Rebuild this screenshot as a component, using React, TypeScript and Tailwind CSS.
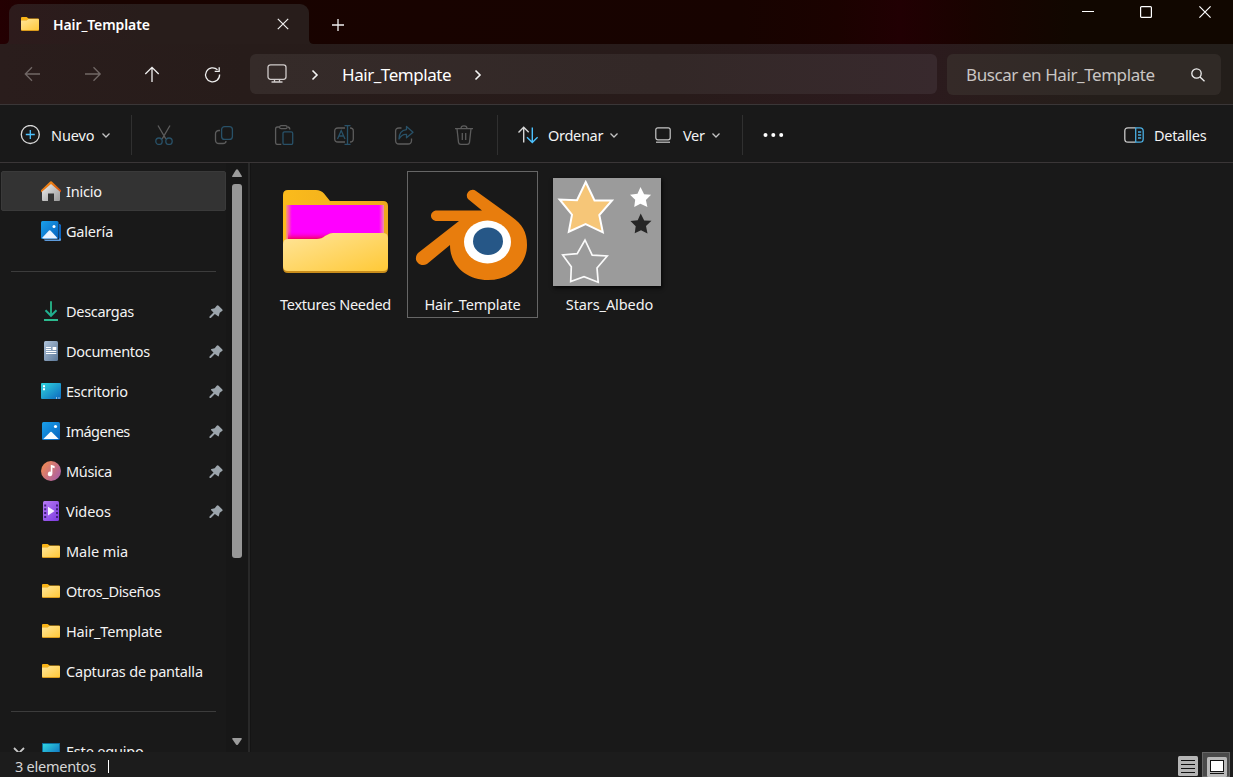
import React from "react";

const Chevron = ({ className = "" }: { className?: string }) => (
  <svg className={className} width="10" height="10" viewBox="0 0 10 10" fill="none" stroke="#c4c4c4" strokeWidth="1.3">
    <path d="M1.5 3.5L5 7l3.5-3.5" />
  </svg>
);

const SmallFolder = () => (
  <svg width="20" height="20" viewBox="0 0 20 20" className="shrink-0">
    <defs>
      <linearGradient id="sf" x1="0" y1="0" x2="1" y2="1">
        <stop offset="0" stopColor="#ffe69a" />
        <stop offset="1" stopColor="#ffc83a" />
      </linearGradient>
    </defs>
    <path d="M1 4q0-1 1-1h4.600l2 1.500h9.400q1 0 1 1v3H1z" fill="#f9b418" />
    <path d="M1 6.500h5.500l2-1.500H18q1 0 1 1V16q0 1-1 1H2q-1 0-1-1z" fill="#d99a1c" />
    <path d="M1 6.500h5.500l2-1.500H18q1 0 1 1V15.300q0 .7-1 .7H2q-1 0-1-.7z" fill="url(#sf)" />
  </svg>
);

const HomeIcon = () => (
  <svg width="20" height="20" viewBox="0 0 20 20">
    <defs>
      <linearGradient id="hm" x1="0" y1="0" x2="1" y2="1">
        <stop offset="0" stopColor="#f0f0f0" />
        <stop offset="1" stopColor="#999" />
      </linearGradient>
      <linearGradient id="roof" x1="0" y1="0" x2="1" y2="1">
        <stop offset="0" stopColor="#f99a17" />
        <stop offset="1" stopColor="#d34a0d" />
      </linearGradient>
    </defs>
    <path d="M1 9.500L10 2l9 7.500V19q0 1-1 1h-5v-7.500H7V20H2q-1 0-1-1z" fill="url(#hm)" />
    <path d="M0 9.300L9.200.600q.8-.7 1.600 0L20 9.300v2.200L10 3 0 11.500z" fill="url(#roof)" />
  </svg>
);

const PictureIcon = ({ stacked = false }: { stacked?: boolean }) => (
  <svg width="20" height="20" viewBox="0 0 20 20">
    <defs>
      <linearGradient id="pic" x1="0" y1="0" x2="1" y2="1">
        <stop offset="0" stopColor="#1aa0ea" />
        <stop offset="1" stopColor="#0761bd" />
      </linearGradient>
    </defs>
    {stacked ? (
      <>
        <path d="M18 3q2 .3 2 2v14q0 1-1 1H5q-1.700 0-2-1.500h15z" fill="#5d9bdc" />
        <path d="M18 3q2 .3 2 2v12.500h-2z" fill="#0c63bd" />
        <rect width="17.500" height="18" rx="1.500" fill="url(#pic)" />
        <path d="M1 17l7-7.500q.7-.7 1.400 0l7 7.500q-.5.600-1.400.600H2.500z" fill="#e9f3ff" />
        <circle cx="13" cy="5.500" r="1.500" fill="#fff" />
      </>
    ) : (
      <>
        <rect x="1" y="1" width="18" height="18" rx="1.500" fill="url(#pic)" />
        <path d="M2.300 18l7-7q.7-.6 1.400 0l7 7z" fill="#f7faff" />
        <circle cx="14.500" cy="5.500" r="1.600" fill="#fff" />
      </>
    )}
  </svg>
);

const DownloadIcon = () => (
  <svg width="20" height="20" viewBox="0 0 20 20" fill="none" strokeWidth="1.800">
    <path d="M10 .3V14" stroke="#27b98c" />
    <path d="M4.500 9.300L10 14.800l5.500-5.500" stroke="#21b090" strokeWidth="2" />
    <path d="M3 19h14" stroke="#2fce9d" />
  </svg>
);

const DocumentIcon = () => (
  <svg width="20" height="20" viewBox="0 0 20 20">
    <defs>
      <linearGradient id="doc" x1="0" y1="0" x2="1" y2="1">
        <stop offset="0" stopColor="#afc3da" />
        <stop offset="1" stopColor="#5c7898" />
      </linearGradient>
    </defs>
    <rect x="3" width="14" height="20" rx="1.500" fill="url(#doc)" />
    <path d="M5 6.500h5M5 8.500h5M5 10.500h10.300M5 12.500h10.300" stroke="#fff" strokeWidth="1.100" />
    <rect x="11.600" y="6" width="3.700" height="3" fill="#fff" />
  </svg>
);

const DesktopIcon = () => (
  <svg width="20" height="20" viewBox="0 0 20 20">
    <defs>
      <linearGradient id="desk" x1="0" y1="0" x2="1" y2="1">
        <stop offset="0" stopColor="#30d6df" />
        <stop offset="1" stopColor="#0d67be" />
      </linearGradient>
    </defs>
    <rect y="2" width="20" height="16" rx="1" fill="url(#desk)" />
    <path d="M2 4.200h2v2H2zM2 7.200h2v2H2zM15 16.500h1v1h-1zM17.500 16.500h1v1h-1z" fill="#fff" />
  </svg>
);

const MusicIcon = () => (
  <svg width="20" height="20" viewBox="0 0 20 20">
    <defs>
      <linearGradient id="mus" x1="0" y1=".2" x2="1" y2=".9">
        <stop offset="0" stopColor="#f18a52" />
        <stop offset="1" stopColor="#a45bab" />
      </linearGradient>
    </defs>
    <circle cx="10" cy="10" r="10" fill="url(#mus)" />
    <path d="M9.800 3.800l3.800 1.200v2.300l-2.200-.7v6.200a2.300 2.300 0 1 1-1.600-2.100z" fill="#fff" />
  </svg>
);

const VideoIcon = () => (
  <svg width="20" height="20" viewBox="0 0 20 20">
    <defs>
      <linearGradient id="vid" x1="0" y1="0" x2="1" y2="1">
        <stop offset="0" stopColor="#b77af5" />
        <stop offset="1" stopColor="#7c3ae0" />
      </linearGradient>
    </defs>
    <rect x="2" width="16" height="20" rx="1.500" fill="url(#vid)" />
    <path d="M3.200 3.500h2v2h-2zM3.200 7.200h2v2h-2zM3.200 11h2v2h-2zM3.200 15h2v2h-2zM15 3.500h2v2h-2zM15 7.200h2v2h-2zM15 11h2v2h-2zM15 15h2v2h-2z" fill="#41207c" />
    <path d="M7 5.700l6.600 4.300L7 14.500z" fill="#f5efff" />
  </svg>
);

const Pin = () => (
  <svg className="mt-px mr-[3px] ml-auto shrink-0" width="14" height="14" viewBox="0 0 14 14" fill="#9ca5ac">
    <path d="M7.700.8q.9-1 1.900 0l3.500 3.500q1 1 0 1.800L10.700 7.700 9.900 10.800q-.3 1-1.200.3L5.900 8.900 1.800 12.900H.5V11.600L4.500 7.500 2.200 5.300q-.7-1.100.3-1.400L5.700 3.200z" />
  </svg>
);

const label = "whitespace-pre text-[14.500px] leading-5 text-[#f3f3f3]";

const NavItem = ({ icon, text, w, pinned = false, active = false }: { icon: React.ReactNode; text: string; w: string; pinned?: boolean; active?: boolean }) => (
  <div className={active ? "flex h-10 w-[225px] shrink-0 items-center rounded-[2px] border border-[#3a3a3a] bg-[#333333] pl-[39px]" : "flex h-10 w-[225px] shrink-0 items-center pl-10"}>
    {icon}
    <span className={`${label} ml-[5px] ${w}`}>{text}</span>
    {pinned && <Pin />}
  </div>
);

const Sidebar = () => (
  <aside className="flex h-full w-[248px] shrink-0 overflow-hidden">
    <nav className="flex w-[226px] shrink-0 flex-col overflow-hidden pt-2 pl-px">
      <NavItem icon={<HomeIcon />} text="Inicio" w="tracking-[-0.2px]" active />
      <NavItem icon={<PictureIcon stacked />} text="Galería" w="tracking-[-0.2px]" />
      <div className="flex h-10 shrink-0 items-center pl-[10px]">
        <div className="h-px w-[205px] bg-[#3c3c3c]" />
      </div>
      <NavItem icon={<DownloadIcon />} text="Descargas" w="tracking-[-0.3px]" pinned />
      <NavItem icon={<DocumentIcon />} text="Documentos" w="tracking-[-0.3px]" pinned />
      <NavItem icon={<DesktopIcon />} text="Escritorio" w="tracking-[-0.25px]" pinned />
      <NavItem icon={<PictureIcon />} text="Imágenes" w="tracking-[-0.5px]" pinned />
      <NavItem icon={<MusicIcon />} text="Música" w="tracking-[-0.35px]" pinned />
      <NavItem icon={<VideoIcon />} text="Videos" w="tracking-[-0.05px]" pinned />
      <NavItem icon={<SmallFolder />} text="Male mia" w="tracking-[-0.05px]" />
      <NavItem icon={<SmallFolder />} text="Otros_Diseños" w="tracking-[-0.33px]" />
      <NavItem icon={<SmallFolder />} text="Hair_Template" w="tracking-[-0.16px]" />
      <NavItem icon={<SmallFolder />} text="Capturas de pantalla" w="tracking-[-0.2px]" />
      <div className="flex h-10 shrink-0 items-center pl-[10px]">
        <div className="h-px w-[205px] bg-[#3c3c3c]" />
      </div>
      <div className="flex h-10 shrink-0 items-center pl-3">
        <svg width="12" height="12" viewBox="0 0 12 12" fill="none" stroke="#c8c8c8" strokeWidth="1.800">
          <path d="M1 3l5 5 5-5" />
        </svg>
        <svg className="ml-4" width="20" height="20" viewBox="0 0 20 20">
          <rect x="1" y="2" width="18" height="15" fill="#0d6d9b" />
          <rect x="2" y="3" width="16" height="13" fill="url(#desk)" />
        </svg>
        <span className={`${label} ml-[5px] tracking-[-0.2px]`}>Este equipo</span>
      </div>
    </nav>
    <div className="flex w-[22px] flex-col items-center bg-[#171717] pt-[6px]">
      <svg width="10" height="9" viewBox="0 0 10 9">
        <path d="M4 .8q1-1 2 0L9.800 7q.3 1-.8 1H1Q-.1 8 .2 7z" fill="#9b9b9b" />
      </svg>
      <div className="mt-[6px] h-[374px] w-[10px] rounded-[3px] bg-[#979797]" />
      <svg className="mt-[180px]" width="10" height="8" viewBox="0 0 10 8">
        <path d="M.2 1Q0 0 1 0h8q1 0 .8 1L6 6.500q-1 1-2 0z" fill="#9b9b9b" />
      </svg>
    </div>
  </aside>
);

const BigFolder = () => (
  <svg width="106" height="84" viewBox="0 0 106 84">
    <defs>
      <linearGradient id="bf" x1="0" y1="0" x2="1" y2="1">
        <stop offset="0" stopColor="#ffe59a" />
        <stop offset="1" stopColor="#ffc937" />
      </linearGradient>
      <linearGradient id="bb" x1="0" y1="0" x2="1" y2="0">
        <stop offset="0" stopColor="#fbbb1c" />
        <stop offset="1" stopColor="#eca91d" />
      </linearGradient>
      <linearGradient id="edge" x1="0" y1="0" x2="1" y2="0">
        <stop offset="0" stopColor="#f29d67" />
        <stop offset=".06" stopColor="#ff00ff" />
        <stop offset=".95" stopColor="#ff00ff" />
        <stop offset="1" stopColor="#f293a8" />
      </linearGradient>
      <linearGradient id="red" x1="0" y1="0" x2="0" y2="1">
        <stop offset="0" stopColor="#ff00ff" stopOpacity="0" />
        <stop offset="1" stopColor="#f00033" />
      </linearGradient>
    </defs>
    <path d="M0 5q0-5 5-5h28q5 0 8 3.500l6 7.500h53q5 0 5 5v50H0z" fill="url(#bb)" />
    <path d="M3 15h98v36H3z" fill="url(#edge)" />
    <path d="M5 41h45v9H5z" fill="url(#red)" />
    <path d="M0 54q0-5 5-5h29q5 0 8-3l2-1q3-2 6-2h50q5 0 5 5v30q0 5-5 5H5q-5 0-5-5z" fill="#c98d1c" />
    <path d="M0 54q0-5 5-5h29q5 0 8-3l2-1q3-2 6-2h50q5 0 5 5v28q0 5-5 5H5q-5 0-5-5z" fill="url(#bf)" />
  </svg>
);

const BlenderLogo = () => (
  <svg width="112" height="92" viewBox="0 0 112 92">
    <path
      d="M61 2c-5-4-12 3-8 8l14 11.500H22c-8 0-8 10.500 0 10.500h22L3 64c-6 7 2 15 9 11l23-19c0 21 17 35 38 35 23 0 39-16 39-35 0-13-5-21-15-28z"
      fill="#e87d0d"
    />
    <ellipse cx="72.500" cy="53" rx="23.500" ry="21.500" fill="#fff" />
    <ellipse cx="73" cy="52.300" rx="15" ry="13.700" fill="#265787" />
  </svg>
);

const StarsTexture = () => (
  <svg className="shadow-[1px_2px_4px_#050505]" width="108" height="108" viewBox="0 0 108 108">
    <rect width="108" height="108" fill="#9b9b9b" />
    <path d="M32.700 4l8.800 18.500 17.500 0-12.700 14.500 3.500 17.300-17.200-8.300-16.800 7.700 3.200-17L6.600 21.500l17.400.7z" fill="#f6c678" stroke="#fff" strokeWidth="2" />
    <path d="M32 62l7.200 15.200 15 .8-10.200 12 1.200 14.300L31 98.700l-13.300 4.800.6-14.700L9.700 77l14.500-1.300z" fill="none" stroke="#fafafa" strokeWidth="1.700" />
    <path d="M87.500 9l3.600 7.200 7 .6-5.200 5.200 1.500 7-7-3.300-6.200 3.300 1-7.200-5.200-5 7.500-1z" fill="#fff" />
    <path d="M87.700 35.500l3.500 7 7.300.3-5.500 5.200 1.500 7.500-6.500-3.200-6.300 3 1-7.100-5.200-5.200 7.200-.8z" fill="#262626" />
  </svg>
);

const FileTile = ({ children, name, tracking, selected = false }: { children: React.ReactNode; name: string; tracking: string; selected?: boolean }) => (
  <div className={`flex h-[147px] w-[131px] shrink-0 flex-col items-center border ${selected ? "border-[#666666]" : "border-transparent"}`}>
    <div className="flex h-[122px] items-center justify-center">{children}</div>
    <span className={`${label} ${tracking}`}>{name}</span>
  </div>
);

const TitleBar = () => (
  <header className="flex h-11 shrink-0 bg-[linear-gradient(90deg,#240002_0%,#190300_8%,#170300_60%,#1b0200_68%,#210003_73%,#190300_79%,#110700_87%,#110700_100%)] pl-[9px]">
    <div className="relative mt-1 flex h-10 w-[300px] items-center rounded-t-[9px] bg-[linear-gradient(90deg,#2d1b1c,#281d1b_45%)] pl-[11px]">
      <svg className="absolute bottom-0 -left-[5px]" width="5" height="5" viewBox="0 0 5 5"><path d="M5 0v5H0q5 0 5-5z" fill="#2b1c1c" /></svg>
      <svg className="absolute -right-[5px] bottom-0" width="5" height="5" viewBox="0 0 5 5"><path d="M0 0v5h5Q0 5 0 0z" fill="#271d1a" /></svg>
      <SmallFolder />
      <span className="mt-[2px] ml-[13px] text-[14px] leading-5 font-semibold tracking-[-0.1px] text-white">Hair_Template</span>
      <svg className="mr-[20px] ml-auto" width="12" height="12" viewBox="0 0 12 12" stroke="#f0f0f0" strokeWidth="1.200">
        <path d="M.8.800l10.400 10.400M11.200.800L.8 11.200" />
      </svg>
    </div>
    <svg className="mt-[19px] ml-[23px]" width="12" height="12" viewBox="0 0 12 12" stroke="#eee" strokeWidth="1.300">
      <path d="M6 0v12M0 6h12" />
    </svg>
    <div className="mt-[6px] mr-[22px] ml-auto flex h-3 items-start">
      <svg className="mr-[46px]" width="12" height="12" viewBox="0 0 12 12" stroke="#fff"><path d="M0 5.500h12" /></svg>
      <svg className="mr-[47px]" width="12" height="12" viewBox="0 0 12 12" fill="none" stroke="#fff" strokeWidth="1.200"><rect x=".6" y=".6" width="10.800" height="10.800" rx="1" /></svg>
      <svg width="12" height="12" viewBox="0 0 12 12" stroke="#fff" strokeWidth="1.200"><path d="M.4.400l11.200 11.200M11.600.400L.4 11.600" /></svg>
    </div>
  </header>
);

const AddressBar = () => (
  <div className="flex h-[60px] shrink-0 items-center bg-[linear-gradient(90deg,#2a1d1c_0%,#271c1a_20%,#281b1a_55%,#2c1a1e_74%,#291c1b_80%,#241e1a_89%,#231e1a_100%)] pl-[22px]">
    <div className="flex w-[228px] shrink-0 gap-10">
      <svg width="20" height="20" viewBox="0 0 20 20" fill="none" stroke="#716866" strokeWidth="1.300"><path d="M10 3.300L3.300 10l6.700 6.700M3.500 10H18" /></svg>
      <svg width="20" height="20" viewBox="0 0 20 20" fill="none" stroke="#716866" strokeWidth="1.300"><path d="M11.500 3.300l6.700 6.700-6.700 6.700M18 10H3" /></svg>
      <svg width="20" height="20" viewBox="0 0 20 20" fill="none" stroke="#f0f0f0" strokeWidth="1.300"><path d="M3.300 10L10 3.300l6.700 6.700M10 3.500V18" /></svg>
      <svg width="20" height="20" viewBox="0 0 20 20" fill="none" stroke="#f0f0f0" strokeWidth="1.300"><path d="M15.500 5.800A7 7 0 1 0 17.600 10.500M17.200 3.300v4h-4.500" /></svg>
    </div>
    <div className="flex h-10 w-[687px] items-center rounded-[6px] bg-[linear-gradient(90deg,#352b29_0%,#332827_60%,#38292d_100%)] pl-[17px]">
      <svg width="20" height="20" viewBox="0 0 20 20" fill="none" stroke="#d0cbca" strokeWidth="1.300"><rect x="1" y=".8" width="18" height="14.500" rx="2.500" /><path d="M7.500 15.500v2.500M12.500 15.500v2.500M4.500 18h11" /></svg>
      <svg className="mt-px ml-6" width="8" height="12" viewBox="0 0 8 12" fill="none" stroke="#f4f4f4" strokeWidth="1.600"><path d="M1.500 1.500L6 6l-4.500 4.500" /></svg>
      <span className="mt-[2px] ml-[23px] w-[109px] text-[17px] whitespace-nowrap tracking-[-0.45px] text-white">Hair_Template</span>
      <svg className="mt-px ml-[23px]" width="8" height="12" viewBox="0 0 8 12" fill="none" stroke="#f4f4f4" strokeWidth="1.600"><path d="M1.500 1.500L6 6l-4.500 4.500" /></svg>
    </div>
    <div className="ml-[10px] flex h-[41px] w-[274px] items-center rounded-[6px] bg-[linear-gradient(90deg,#352a28,#302a26_55%)] pl-[19px]">
      <span className="mt-px text-[17px] whitespace-nowrap tracking-[-0.42px] text-[#c9c5c3]">Buscar en Hair_Template</span>
      <svg className="mt-px mr-[16px] ml-auto" width="14" height="14" viewBox="0 0 14 14" fill="none" stroke="#f0f0f0" strokeWidth="1.300"><circle cx="5.500" cy="5.500" r="4.700" /><path d="M9 9l4.500 4.300" /></svg>
    </div>
  </div>
);

const gray = "#5c5c5c";
const blue = "#285168";

const CommandBar = () => (
  <div className="flex h-[59px] shrink-0 items-center border-y border-[#3a3637] bg-[#191919] pt-[2px] pl-5">
    <svg width="20" height="20" viewBox="0 0 20 20" fill="none" strokeWidth="1.300">
      <circle cx="10.300" cy="9.500" r="9" stroke="#d9d9d9" />
      <path d="M10.300 5v9M5.800 9.500h9" stroke="#4cc2ff" />
    </svg>
    <span className={`${label} ml-[11px] w-[43px] tracking-[-0.1px]`}>Nuevo</span>
    <Chevron className="ml-[7px]" />
    <div className="mr-[22px] ml-5 h-10 w-px bg-[#303030]" />
    <div className="flex gap-10">
      <svg width="20" height="20" viewBox="0 0 20 20" fill="none" strokeWidth="1.300">
        <path d="M4 .5l7.800 13.300M16 .5L8.200 13.800" stroke={gray} />
        <circle cx="5" cy="16.200" r="3.200" stroke={blue} />
        <circle cx="15" cy="16.200" r="3.200" stroke={blue} />
      </svg>
      <svg width="20" height="20" viewBox="0 0 20 20" fill="none" strokeWidth="1.300">
        <path d="M6 5.500H5Q1.500 5.500 1.500 9v6q0 3.500 3.500 3.500h4q3 0 3-2.500" stroke={gray} />
        <rect x="7.600" y="1.600" width="10.800" height="12.800" rx="3" stroke={blue} />
      </svg>
      <svg width="20" height="20" viewBox="0 0 20 20" fill="none" strokeWidth="1.300">
        <path d="M5.500 2H3.500Q1.600 2 1.600 4v13.500q0 1.900 1.900 1.900h3.800M13.500 2q2.300 0 2.300 2.500" stroke={gray} />
        <rect x="5.600" y=".7" width="7.500" height="3" rx="1.500" stroke={gray} />
        <rect x="9" y="6.800" width="9.700" height="12.600" rx="1.500" stroke={blue} />
      </svg>
      <svg width="20" height="20" viewBox="0 0 20 20" fill="none" strokeWidth="1.300">
        <path d="M11 3H4Q.7 3 .7 6v8q0 3 3.300 3h7M16 3q3.300 0 3.300 3v8q0 3-3.300 3" stroke={gray} />
        <path d="M3.500 14L7.200 5.500 11 14M4.800 11h4.800M13.500.7v18.600M10.500.7h6M10.500 19.300h6" stroke={blue} />
      </svg>
      <svg width="20" height="20" viewBox="0 0 20 20" fill="none" strokeWidth="1.300">
        <path d="M7.500 3H5Q1.600 3 1.600 6v9.500Q1.600 19 5 19h9q3.500 0 3.500-3.500v-2" stroke={gray} />
        <path d="M12.500 1.500L19 7.300l-6.500 5.500V9.500Q8 9 5 14q0-8.500 7.500-9.400z" stroke={blue} strokeLinejoin="round" />
      </svg>
      <svg width="20" height="20" viewBox="0 0 20 20" fill="none" stroke={gray} strokeWidth="1.300">
        <path d="M1 3.600h18M7 3.500q0-2.700 3-2.700t3 2.700M3 3.800l1.500 13.500q.3 2 2.300 2h6.400q2 0 2.300-2L17 3.800M8.300 8v7M11.700 8v7" />
      </svg>
    </div>
    <div className="mr-5 ml-[23px] h-10 w-px bg-[#303030]" />
    <svg width="20" height="20" viewBox="0 0 20 20" fill="none" strokeWidth="1.400">
      <path d="M.5 7.500L5.700 2.300l5 5M5.700 2.500v15" stroke="#d6d6d6" />
      <path d="M9 12.200l5.300 5.300 5.300-5.300M14.300 2.500v15" stroke="#4cc2ff" />
    </svg>
    <span className={`${label} ml-[10px] w-[56px] tracking-[-0.3px]`}>Ordenar</span>
    <Chevron className="ml-[5px]" />
    <svg className="ml-[36px]" width="16" height="16" viewBox="0 0 16 16" fill="none" stroke="#c6c6c6" strokeWidth="1.200">
      <rect x=".8" y=".8" width="14.400" height="12" rx="2" /><path d="M1 15.200h14" />
    </svg>
    <span className={`${label} ml-3 w-[23px] tracking-[-0.3px]`}>Ver</span>
    <Chevron className="ml-[5px]" />
    <div className="mr-5 ml-[21px] h-10 w-px bg-[#303030]" />
    <svg width="22" height="6" viewBox="0 0 22 6" fill="#fff"><circle cx="2.500" cy="3" r="2" /><circle cx="10.300" cy="3" r="2" /><circle cx="18.200" cy="3" r="2" /></svg>
    <svg className="ml-auto" width="20" height="16" viewBox="0 0 20 16" fill="none" strokeWidth="1.300">
      <path d="M11.500.8H4Q.8.800.8 4v8q0 3.200 3.200 3.200h7.500" stroke="#c9c9c9" />
      <path d="M11.700.8H16q3.200 0 3.200 3.200v8q0 3.200-3.200 3.200h-4.300zM14 5h3.200M14 8h3.200M14 11h3.200" stroke="#4aaee2" />
    </svg>
    <span className={`${label} mr-[26px] ml-[10px] w-[53px] tracking-[-0.3px]`}>Detalles</span>
  </div>
);

export default function App() {
  return (
    <div className="flex h-[777px] w-[1233px] flex-col overflow-hidden bg-[#191919] font-['Noto_Sans','Open_Sans',sans-serif]">
      <TitleBar />
      <AddressBar />
      <CommandBar />
      <div className="flex h-[589px] shrink-0">
        <Sidebar />
        <div className="w-[3px] shrink-0 border-r border-[#141414] bg-[#292929]" />
        <main className="flex flex-1 pt-2 pl-[19px]">
          <FileTile name="Textures Needed" tracking="tracking-[-0.25px]"><div className="pb-[3px]"><BigFolder /></div></FileTile>
          <div className="ml-[6px]">
            <FileTile name="Hair_Template" tracking="tracking-[-0.16px]" selected><div className="pt-[3px] pr-[3px]"><BlenderLogo /></div></FileTile>
          </div>
          <div className="ml-[6px]">
            <FileTile name="Stars_Albedo" tracking="tracking-[-0.1px]"><div className="pr-[6px] pb-[2px]"><StarsTexture /></div></FileTile>
          </div>
        </main>
      </div>
      <footer className="flex h-[25px] shrink-0 items-start bg-[#1c1c1c] pl-[15px]">
        <span className="mt-1 w-[82px] text-[14.500px] leading-5 tracking-[-0.25px] whitespace-nowrap text-[#d6d6d6]">3 elementos</span>
        <div className="mt-2 ml-[11px] h-[13px] w-px bg-white" />
        <div className="mr-[3px] ml-auto flex">
          <svg className="mt-1 mr-1" width="20" height="21" viewBox="0 0 20 21"><rect width="20" height="20" rx="1.500" fill="#b5b5b5" /><path d="M3 4.500h14M3 8.500h14M3 12.500h14M3 16.500h14" stroke="#111" /></svg>
          <div className="h-[25px] w-7 border border-[#666] bg-[#4a4a4a] pt-[4px] pl-[4px]">
            <svg width="20" height="20" viewBox="0 0 20 20"><rect width="20" height="20" rx="1.500" fill="#b9b9b9" /><rect x="3.500" y="3.500" width="13" height="11" fill="#fff" stroke="#111" /><path d="M3 16.500h14" stroke="#111" /></svg>
          </div>
        </div>
      </footer>
    </div>
  );
}
